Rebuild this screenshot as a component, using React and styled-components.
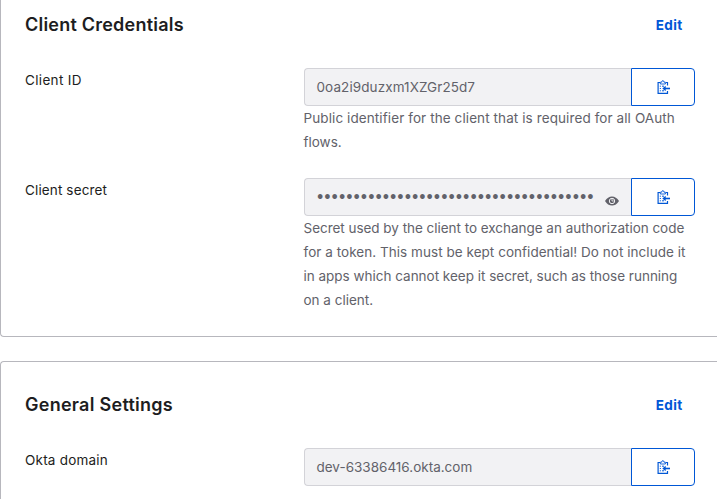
import React from "react";
import styled, { createGlobalStyle } from "styled-components";

const GlobalStyle = createGlobalStyle`
  *, *::before, *::after { box-sizing: border-box; }
  html, body { margin: 0; background: #fff; }
  body {
    font-family: Inter, "Liberation Sans", sans-serif;
    font-size: 13.5px;
    line-height: 24px;
    color: #1d1d21;
    overflow: hidden;
  }
`;

const Page = styled.main`
  display: flex;
  flex-direction: column;
  gap: 24px;
  width: 717px;
  height: 499px;
  overflow: hidden;
`;

const Panel = styled.section`
  flex: none;
  border: 1px solid #b7b7bd;
  border-right: 0;
  border-top-width: ${(p) => (p.$continued ? 0 : "1px")};
  border-radius: ${(p) => (p.$continued ? "0 0 0 4px" : "4px 0 0 4px")};
  padding: ${(p) => (p.$continued ? "12px" : "30px")} 22px 24px 24px;
`;

const PanelHeader = styled.header`
  display: flex;
  align-items: center;
  justify-content: space-between;
  height: 26px;
  margin-bottom: 30px;
  padding-right: 12.5px;
`;

const Title = styled.h2`
  margin: 0;
  font: 600 18px/26px Inter, sans-serif;
  letter-spacing: ${(p) => p.$track}px;
`;

const EditButton = styled.button`
  border: 0;
  padding: 0;
  background: none;
  color: #0057d6;
  font: 700 13.5px/24px Inter, sans-serif;
  letter-spacing: 0.35px;
`;

const Row = styled.div`
  display: grid;
  grid-template-columns: 279px 391px;

  & + & { margin-top: 24px; }
`;

const Label = styled.label`
  letter-spacing: ${(p) => p.$track}px;
`;

const Field = styled.div`
  display: flex;
  height: 38px;
`;

const Value = styled.div`
  display: flex;
  align-items: center;
  justify-content: space-between;
  width: 327px;
  padding: 0 12px 0 11.5px;
  border: 1px solid #d3d3d8;
  border-right: 0;
  border-radius: 4px 0 0 4px;
  background: #f2f2f4;
  color: #62626a;
  white-space: nowrap;
`;

const ValueText = styled.span`
  letter-spacing: ${(p) => p.$track}px;
`;

const Mask = styled.span`
  font: 400 12.6px/24px Lato, sans-serif;
`;

const EyeIcon = styled.svg`
  width: 14px;
  height: 10px;
  margin-top: 8px;
`;

const CopyButton = styled.button`
  display: flex;
  align-items: center;
  justify-content: center;
  width: 64px;
  padding: 0;
  border: 1px solid #0057d6;
  border-radius: 0 4px 4px 0;
  background: #fff;
  color: #0057d6;
`;

const Help = styled.p`
  margin: 0 0 0 -0.5px;
  color: #62626a;
`;

const HelpLine = styled.span`
  display: block;
  white-space: nowrap;
  letter-spacing: ${(p) => p.$track}px;
`;

function Clipboard() {
  return (
    <svg width="13" height="14" viewBox="0 0 13 14" fill="none" stroke="currentColor">
      <path d="M3 2.500H1.100V13.300H10.500V11M9 2.500H10.500V5.600" strokeWidth="1.200" />
      <path d="M3.300 4V2.200H4.700Q4.700 .6 5.850 .6T7 2.200H8.400V4Z" strokeWidth=".9" />
      <path d="M2.800 6.200H3.900M5 6.200H7M2.800 8.500H3.900M2.800 10.800H3.900M5 10.800H7" strokeWidth="1" />
      <path d="M13 8.500H7" strokeWidth="1.600" />
      <path d="M8.700 5.700V11.300L5.300 8.500Z" fill="currentColor" stroke="none" />
    </svg>
  );
}

function Eye() {
  return (
    <EyeIcon viewBox="0 0 14 10">
      <path d="M0 5Q2.800 .4 7 .4T14 5Q11.200 9.600 7 9.600T0 5Z" fill="#62626a" />
      <circle cx="7" cy="5" r="2.700" fill="none" stroke="#f2f2f4" strokeWidth="1" />
      <path d="M7 3V5H8.800" fill="none" stroke="#f2f2f4" strokeWidth=".8" />
    </EyeIcon>
  );
}

function SettingRow({ label, labelTrack, children, help = [] }) {
  return (
    <Row>
      <Label $track={labelTrack}>{label}</Label>
      <div>
        <Field>
          <Value>{children}</Value>
          <CopyButton aria-label="Copy to clipboard"><Clipboard /></CopyButton>
        </Field>
        {help.length > 0 && (
          <Help>
            {help.map(([text, track]) => (
              <HelpLine key={text} $track={track}>{text}</HelpLine>
            ))}
          </Help>
        )}
      </div>
    </Row>
  );
}

const ID_HELP = [
  ["Public identifier for the client that is required for all OAuth", 0.095],
  ["flows.", 0],
];

const SECRET_HELP = [
  ["Secret used by the client to exchange an authorization code", -0.03],
  ["for a token. This must be kept confidential! Do not include it", 0.04],
  ["in apps which cannot keep it secret, such as those running", -0.01],
  ["on a client.", 0],
];

export default function App() {
  return (
    <>
      <GlobalStyle />
      <Page>
        <Panel $continued>
          <PanelHeader>
            <Title $track={0.22}>Client Credentials</Title>
            <EditButton>Edit</EditButton>
          </PanelHeader>
          <SettingRow label="Client ID" labelTrack={0.33} help={ID_HELP}>
            <ValueText $track={0.09}>0oa2i9duzxm1XZGr25d7</ValueText>
          </SettingRow>
          <SettingRow label="Client secret" labelTrack={0.13} help={SECRET_HELP}>
            <Mask>{"•".repeat(38)}</Mask>
            <Eye />
          </SettingRow>
        </Panel>
        <Panel>
          <PanelHeader>
            <Title $track={0.27}>General Settings</Title>
            <EditButton>Edit</EditButton>
          </PanelHeader>
          <SettingRow label="Okta domain" labelTrack={0.22}>
            <ValueText $track={0}>dev-63386416.okta.com</ValueText>
          </SettingRow>
        </Panel>
      </Page>
    </>
  );
}
